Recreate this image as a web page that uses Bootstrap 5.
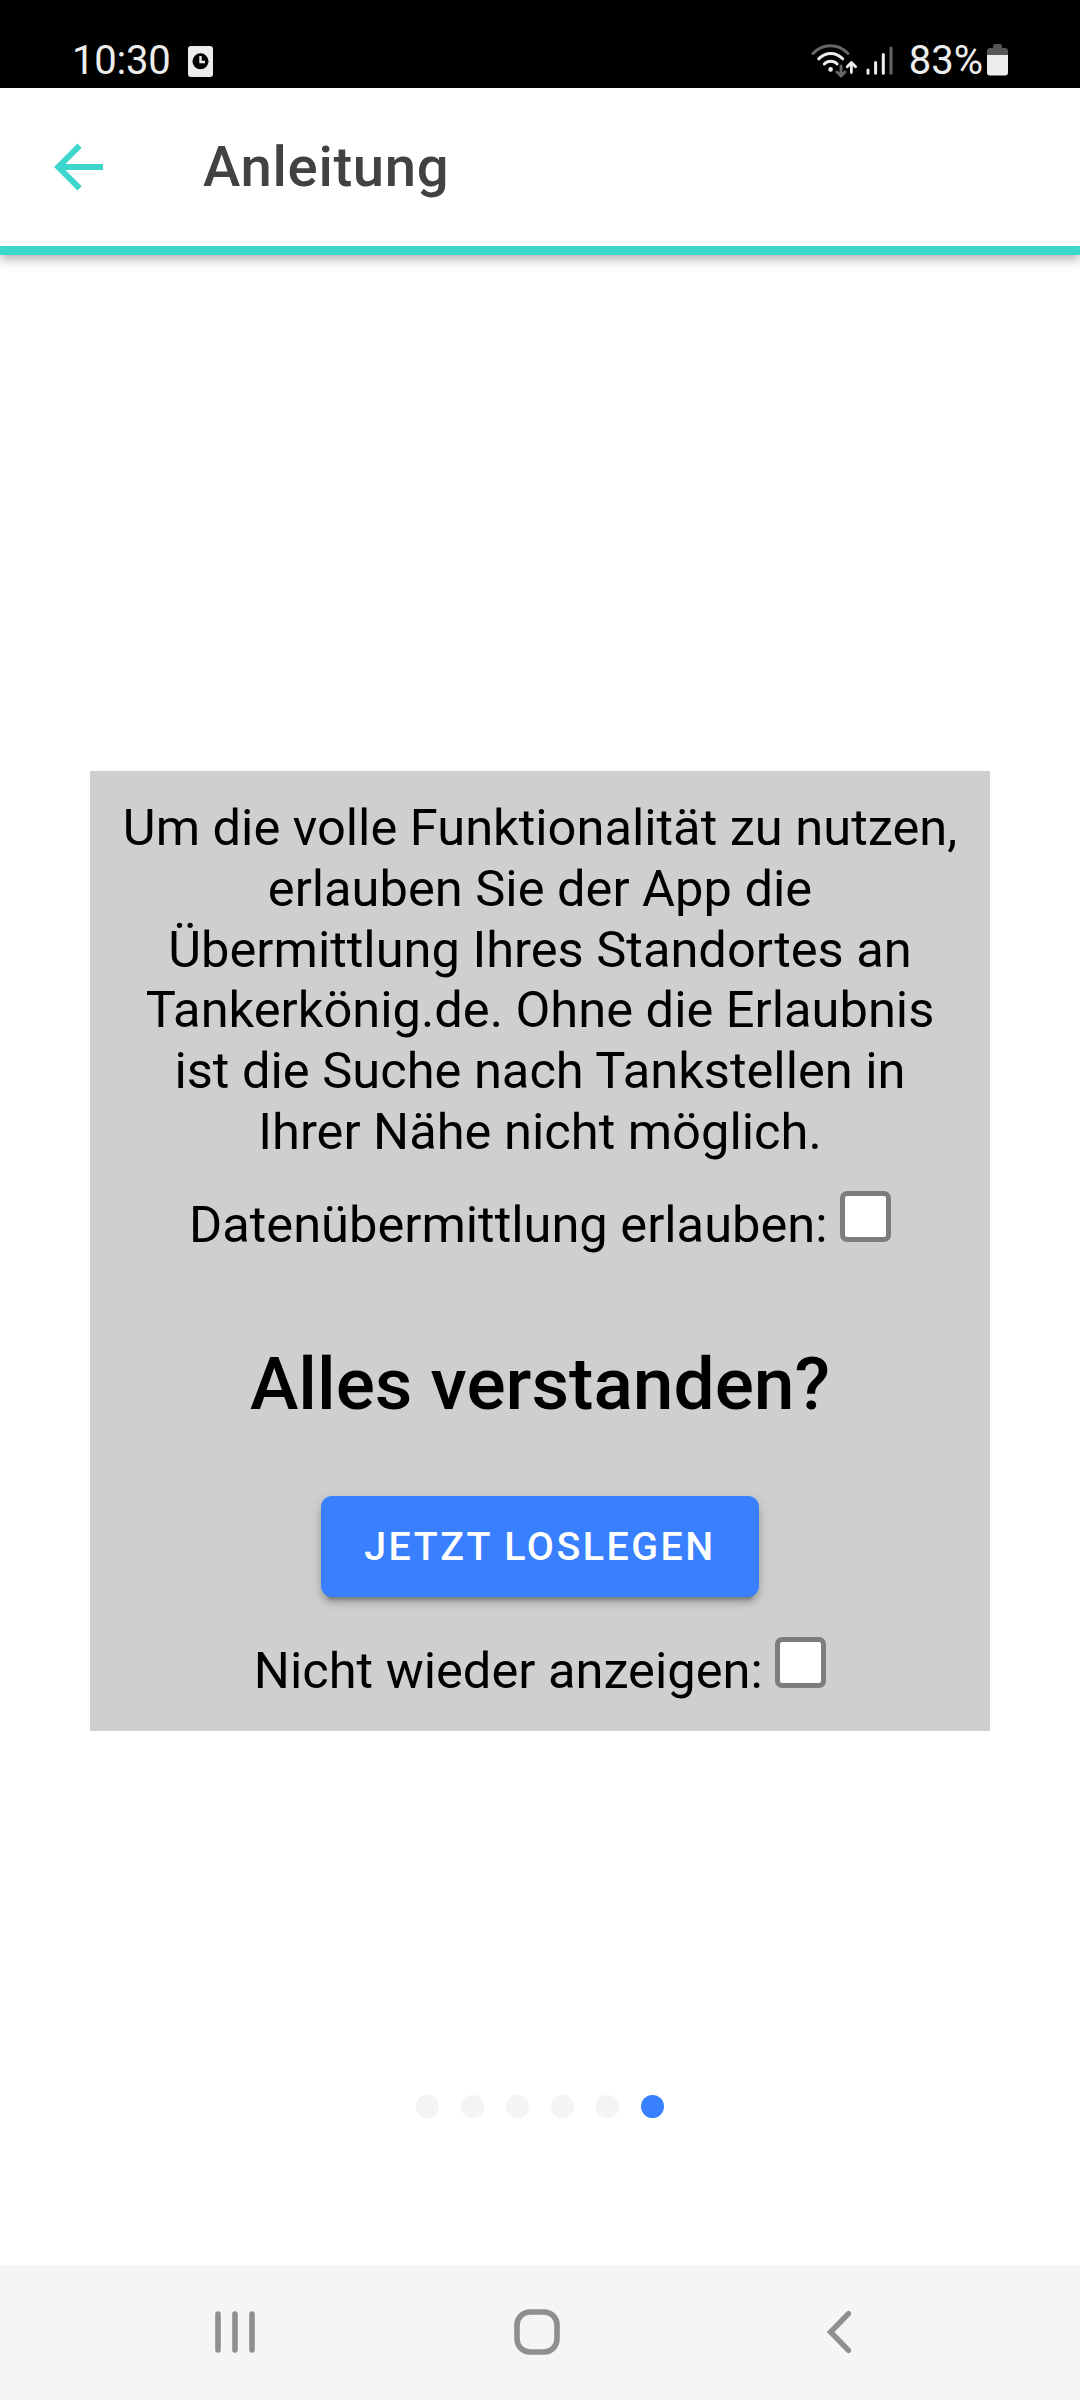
<!DOCTYPE html>
<html lang="de">
<head>
<meta charset="utf-8">
<meta name="viewport" content="width=device-width, initial-scale=1">
<title>Anleitung</title>
<link href="https://cdn.jsdelivr.net/npm/bootstrap@5.3.0/dist/css/bootstrap.min.css" rel="stylesheet">
<style>
  body { font-family: Roboto, "Noto Sans", sans-serif; font-size: 50.625px; line-height: 60.75px; color: #000; }
  svg { display: block; flex: none; }
  .screen { width: 1080px; height: 2400px; }
  .status-bar { height: 88px; padding: 37px 72px 0 72px; background: #000; color: #ededed; font-size: 40px; line-height: 48px; }
  .clock-text { letter-spacing: -.25px; }
  .battery-text { margin: 0 3px 0 15px; }
  .app-header { height: 167px; padding: 0 50px; border-bottom: 9px solid #3dd6cc; box-shadow: 0 4px 11px rgba(0,0,0,.32); }
  .app-title { margin: 0 0 0 97px; font-size: 56.25px; line-height: 68px; font-weight: 500; letter-spacing: .7px; color: #424242; }
  .slide-body { padding: 516px 90px 0; }
  .info-panel { height: 960px; padding-top: 27px; background: #cfcfcf; }
  .info-text { margin: 0 30px 28.5px; }
  .check-row { gap: 12.5px; height: 64px; }
  .check-row .form-check-input { width: 51px; height: 51px; margin: 0; border: 5px solid #7d7d7d; border-radius: 7px; background: #fff; flex: none; }
  .info-heading { margin: 86px 0 67px; font-size: 73.125px; line-height: 87.75px; font-weight: 500; }
  .start-btn, .start-btn:hover { width: 438px; height: 101px; padding: 0; margin-bottom: 40px; border: 0; border-radius: 11px; background: #3880ff; color: #fff; font-size: 39.375px; line-height: 101px; font-weight: 500; letter-spacing: 2.5px; box-shadow: 0 9px 3px -6px rgba(0,0,0,.2), 0 6px 6px 0 rgba(0,0,0,.16), 0 3px 14px 0 rgba(0,0,0,.12); }
  .pager { gap: 22px; margin-top: 364px; }
  .pager-dot { width: 23px; height: 23px; background: #f4f4f4; }
  .pager-dot.current { background: #3880ff; }
  .system-nav { height: 135px; background: #f5f5f5; padding: 0 229px 1px 215px; }
  .home-icon { margin-right: 8px; }
</style>
</head>
<body>
<div class="screen d-flex flex-column bg-white overflow-hidden">

  <div class="status-bar d-flex align-items-start flex-shrink-0">
    <span class="clock-text">10:30</span>
    <svg class="ms-3 mt-2" width="27" height="34" viewBox="187 45 27 34">
      <rect x="189" y="46" width="25" height="31" rx="3" fill="#ededed"/>
      <circle cx="201.5" cy="61.3" r="8" fill="#000"/>
      <path d="M201.5 56v6H206" fill="none" stroke="#ededed" stroke-width="2.4"/>
    </svg>
    <svg class="ms-auto" width="83" height="42" viewBox="811 37 83 42" fill="none" stroke="#ededed" stroke-width="3" stroke-linecap="round" stroke-linejoin="round">
      <path d="M813 53.5C823 43.3 838 43.3 848 53.5" stroke="#666"/>
      <path d="M818.7 58.8C826 51.7 835.5 51.7 842.7 58.8"/>
      <path d="M824.3 64C828 60.3 833.5 60.3 837.2 64"/>
      <circle cx="830.6" cy="69.4" r="2.3" fill="#ededed" stroke="none"/>
      <path d="M841 66v9.6M837 72l4 4 4-4" stroke="#666"/>
      <path d="M851.4 72.6V63M847.2 66.8l4.2-4.3 4.2 4.3" stroke-width="2.8"/>
      <path d="M868 70v3.2M875.6 62.5v10.7M883.3 54.5v18.7"/>
      <path d="M891 48v25.2" stroke="#666"/>
    </svg>
    <span class="battery-text">83%</span>
    <svg width="22" height="42" viewBox="986 37 22 42">
      <path d="M993 48v-2a2 2 0 0 1 2-2h5a2 2 0 0 1 2 2v2h3a3 3 0 0 1 3 3v4h-21v-4a3 3 0 0 1 3-3z" fill="#565656"/>
      <path d="M987 55h21v17.5a3 3 0 0 1-3 3h-15a3 3 0 0 1-3-3z" fill="#ededed"/>
    </svg>
  </div>

  <header class="app-header d-flex align-items-center flex-shrink-0">
    <svg width="56" height="56" viewBox="50 139 56 56" fill="none" stroke="#3dd6cc" stroke-width="6">
      <path d="M79.6 145.6L58.3 167l21.3 21.4M58 167h45"/>
    </svg>
    <h1 class="app-title">Anleitung</h1>
  </header>

  <main class="slide-body flex-grow-1">
    <section class="info-panel d-flex flex-column align-items-center text-center">
      <p class="info-text">Um die volle Funktionalität zu nutzen,<br>erlauben Sie der App die<br>Übermittlung Ihres Standortes an<br>Tankerkönig.de. Ohne die Erlaubnis<br>ist die Suche nach Tankstellen in<br>Ihrer Nähe nicht möglich.</p>
      <div class="check-row d-flex align-items-baseline">
        <label for="allow">Datenübermittlung erlauben:</label>
        <input class="form-check-input" type="checkbox" id="allow">
      </div>
      <h2 class="info-heading">Alles verstanden?</h2>
      <button type="button" class="btn start-btn">JETZT LOSLEGEN</button>
      <div class="check-row d-flex align-items-baseline">
        <label for="hide">Nicht wieder anzeigen:</label>
        <input class="form-check-input" type="checkbox" id="hide">
      </div>
    </section>
    <div class="pager d-flex justify-content-center">
      <span class="pager-dot rounded-circle"></span>
      <span class="pager-dot rounded-circle"></span>
      <span class="pager-dot rounded-circle"></span>
      <span class="pager-dot rounded-circle"></span>
      <span class="pager-dot rounded-circle"></span>
      <span class="pager-dot current rounded-circle"></span>
    </div>
  </main>

  <nav class="system-nav d-flex align-items-center justify-content-between flex-shrink-0">
    <svg width="40" height="48" viewBox="0 0 40 48" stroke="#8f8f8f" stroke-width="5.6" stroke-linecap="round">
      <path d="M3 6v36M20 6v36M37 6v36"/>
    </svg>
    <svg class="home-icon" width="48" height="48" viewBox="0 0 48 48" fill="none" stroke="#8f8f8f" stroke-width="5.6">
      <rect x="4" y="4" width="40" height="40" rx="13"/>
    </svg>
    <svg width="24" height="48" viewBox="0 0 24 48" fill="none" stroke="#8f8f8f" stroke-width="5.4" stroke-linecap="round">
      <path d="M21.5 5.7L3.6 24l17.9 18.3"/>
    </svg>
  </nav>
</div>
<script src="https://cdn.jsdelivr.net/npm/bootstrap@5.3.0/dist/js/bootstrap.bundle.min.js"></script>
</body>
</html>
